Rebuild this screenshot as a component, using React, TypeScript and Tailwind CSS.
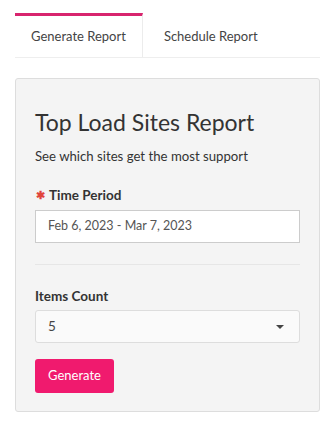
import React from "react";

export default function App() {
  return (
    <div className="bg-white w-[335px] h-[430px] px-[15px] pt-[13px] text-[#333]" style={{ fontFamily: "Lato, 'Noto Sans', sans-serif" }}>
      <div className="flex border-b border-[#eeeeee]">
        <div className="h-[44px] px-4 border-t-[3px] border-[#d8246e] border-r border-r-[#ececec] flex items-center text-[13px] text-[#444]">
          Generate Report
        </div>
        <div className="h-[44px] px-[21px] pt-[3px] flex items-center text-[13px] text-[#444]">
          Schedule Report
        </div>
      </div>
      <div className="mt-5 bg-[#f4f4f4] border border-[#dddddd] rounded-[3px] px-[19px] pt-[29px] pb-[18px]">
        <div className="text-[23px] leading-[28px] text-[#333]">Top Load Sites Report</div>
        <div className="mt-[10px] text-[13.2px] leading-[20px] text-[#333]">See which sites get the most support</div>
        <div className="mt-[19px] text-[13.5px] leading-[20px] font-bold flex items-center">
          <span className="text-[#e0443c] text-[11px] mr-[4px] ml-[1px]">✱</span>
          Time Period
        </div>
        <div className="mt-[5px] h-[33px] bg-white border border-[#cccccc] flex items-center px-[12px] text-[12.5px] text-[#555]">
          Feb 6, 2023 - Mar 7, 2023
        </div>
        <div className="mt-[21px] h-px bg-[#e6e6e6]" />
        <div className="mt-[21px] text-[13.5px] leading-[20px] font-bold">Items Count</div>
        <div className="mt-[4px] h-[33px] bg-[#fafafa] border border-[#dddddd] rounded-[3px] flex items-center justify-between px-[12px] text-[13.5px] text-[#444]">
          <span>5</span>
          <svg width="10" height="6" viewBox="0 0 10 6" className="mr-[2px]">
            <path d="M1 1 L9 1 L5 5 Z" fill="#444" />
          </svg>
        </div>
        <button className="mt-[16px] h-[34px] w-[79px] bg-[#f01a6e] rounded-[3px] text-white text-[13px] flex items-center justify-center">
          Generate
        </button>
      </div>
    </div>
  );
}
